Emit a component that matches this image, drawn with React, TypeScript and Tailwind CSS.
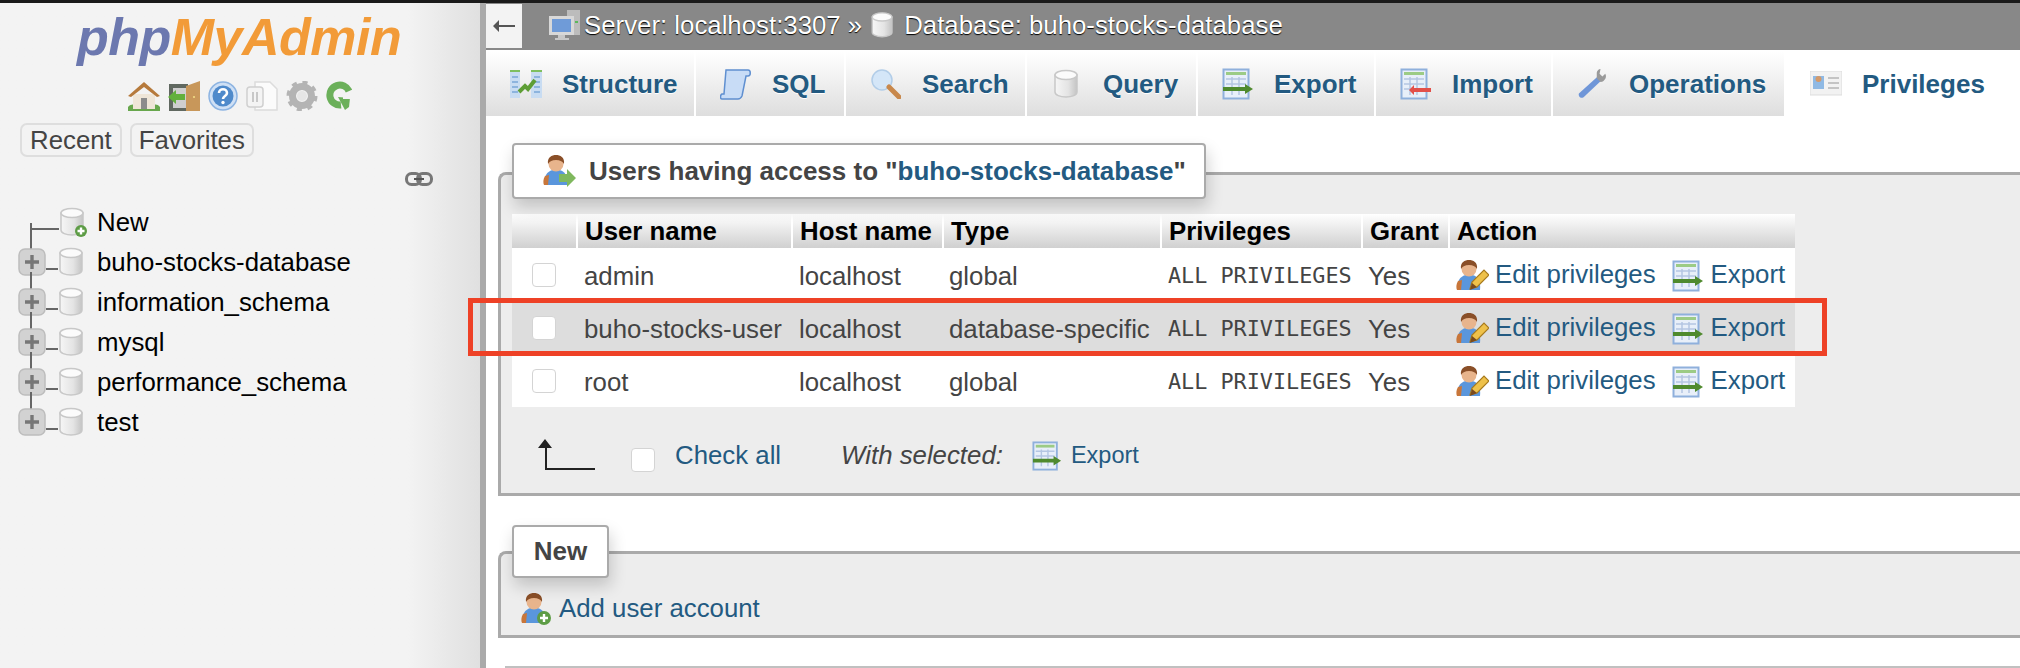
import React from "react";

const sans = "font-['Liberation_Sans',Arial,sans-serif]";

const Db = ({ plus }: { plus?: boolean }) => (
  <svg width="28" height="30" viewBox="0 0 28 30" className="shrink-0">
    <defs>
      <linearGradient id="dbg" x1="0" x2="1" y1="0" y2="0">
        <stop offset="0" stopColor="#f6f6f6" />
        <stop offset="0.6" stopColor="#e4e4e4" />
        <stop offset="1" stopColor="#c4c4c4" />
      </linearGradient>
    </defs>
    <path d="M2 6v17c0 3 5 5 11 5s11-2 11-5V6z" fill="url(#dbg)" stroke="#c8c8c8" strokeWidth="1.5" />
    <ellipse cx="13" cy="6" rx="11" ry="4.5" fill="#fbfbfb" stroke="#c8c8c8" strokeWidth="1.5" />
    {plus && (
      <>
        <circle cx="22" cy="24" r="6" fill="#5d9c45" />
        <path d="M22 20.5v7M18.5 24h7" stroke="#fff" strokeWidth="2.4" />
      </>
    )}
  </svg>
);

const PlusBox = () => (
  <svg width="28" height="28" viewBox="0 0 28 28" className="shrink-0">
    <rect x="1" y="1" width="26" height="26" rx="6" fill="#d2d2d2" stroke="#bdbdbd" strokeWidth="1.5" />
    <path d="M14 7v14M7 14h14" stroke="#777" strokeWidth="3.4" />
  </svg>
);

const TableIcon = ({ arrow = "#4f8a2e", left, size = 32 }: { arrow?: string; left?: boolean; size?: number }) => (
  <svg width={size} height={size} viewBox="0 0 32 32" className="shrink-0">
    <rect x="1.5" y="1.5" width="25" height="29" fill="#e8eff9" stroke="#8fb0dc" strokeWidth="2" />
    <rect x="4" y="4" width="20" height="3" fill="#9ccb85" />
    <path d="M4 11h20M4 16h20M4 21h20M10 9v18M17 9v18" stroke="#b4c6e2" strokeWidth="1.5" />
    {left ? (
      <path d="M31 20v4H14v3l-5-5 5-5v3z" fill={arrow} />
    ) : (
      <path d="M1 19h22v-3l8 5-8 5v-3H1z" fill={arrow} />
    )}
  </svg>
);

const UserBase = ({ children, size = 34 }: { children?: React.ReactNode; size?: number }) => (
  <svg width={size} height={size} viewBox="0 0 34 34" className="shrink-0">
    <path d="M3 31c-2-8 2-14 8-15h6c6 1 9 6 8 15z" fill="#5a96dc" />
    <path d="M3 22c-2 3-2 7-1 9h4l1-10z" fill="#c8763a" />
    <circle cx="14" cy="10" r="7.5" fill="#e8b48c" />
    <path d="M6 10c-1-7 4-9 8-9s9 2 8 9c-2-3-4-4-8-4s-6 1-8 4z" fill="#8a4f28" />
    {children}
  </svg>
);

const EditUser = () => (
  <UserBase>
    <path d="M15 30l2-7 12-12 5 5-12 12z" fill="#eec14a" stroke="#a67a1e" strokeWidth="1.2" />
    <path d="M15 31l2-7 5 4z" fill="#7a4a1e" />
  </UserBase>
);

const Home = () => (
  <svg width="32" height="30" viewBox="0 0 32 30">
    <path d="M0 26c3-3 6-3 8-1h16c3-2 5-2 8 1v4H0z" fill="#68a74d" />
    <path d="M5 13h22v15H5z" fill="#efe6d8" />
    <path d="M13 17h6v11h-6z" fill="#8c8c8c" />
    <path d="M0 15L16 1l16 14-3 1L16 6 3 16z" fill="#b67a3c" />
  </svg>
);

const Exit = () => (
  <svg width="32" height="30" viewBox="0 0 32 30">
    <path d="M1 3h19v27H1z" fill="#606860" />
    <path d="M5 7h13v20H5z" fill="#cfcfcf" />
    <path d="M18 5l14-5v30H18z" fill="#c8975a" />
    <circle cx="26" cy="16" r="1" fill="#f4e08a" />
    <path d="M0 16l8-7v4h9v6H8v4z" fill="#62b03d" />
  </svg>
);

const Help = () => (
  <svg width="30" height="30" viewBox="0 0 30 30">
    <circle cx="15" cy="15" r="14" fill="#cfe0f5" stroke="#8db4e2" strokeWidth="1.5" />
    <circle cx="15" cy="15" r="10.5" fill="#4f8acb" />
    <path d="M11 12c0-5 8-5 8 0 0 3-4 3-4 6" fill="none" stroke="#fff" strokeWidth="2.6" />
    <circle cx="15" cy="21.5" r="1.7" fill="#fff" />
  </svg>
);

const Docs = () => (
  <svg width="32" height="30" viewBox="0 0 32 30">
    <path d="M9 1h15l7 7v21H9z" fill="#fbfbfb" stroke="#dcdcdc" strokeWidth="1.5" />
    <rect x="1" y="6" width="16" height="20" rx="3" fill="#f4f4f4" stroke="#d0d0d0" strokeWidth="1.5" />
    <path d="M7 11v10M11 11v10" stroke="#c8c8c8" strokeWidth="2" />
  </svg>
);

const Gear = () => (
  <svg width="32" height="30" viewBox="0 0 32 30">
    <circle cx="16" cy="15" r="9.5" fill="none" stroke="#b4b4b4" strokeWidth="7" />
    <circle cx="16" cy="15" r="13.5" fill="none" stroke="#b4b4b4" strokeWidth="4" strokeDasharray="5 5.6" />
    <circle cx="16" cy="15" r="5" fill="#e6e6e6" />
  </svg>
);

const Reload = () => (
  <svg width="26" height="30" viewBox="0 0 26 30">
    <path d="M23 10A10 10 0 1 0 15 24" fill="none" stroke="#6bb05a" strokeWidth="7" />
    <path d="M12 16l12 1-1 9-4 3z" fill="#6bb05a" />
    <path d="M17 12h8v6h-8z" fill="#f3f3f3" />
  </svg>
);

const LinkIcon = () => (
  <svg width="28" height="16" viewBox="0 0 28 16">
    <rect x="1.5" y="2.5" width="14" height="11" rx="5" fill="none" stroke="#777" strokeWidth="3" />
    <rect x="12.5" y="2.5" width="14" height="11" rx="5" fill="none" stroke="#777" strokeWidth="3" />
    <path d="M9 8h10" stroke="#555" strokeWidth="2" />
  </svg>
);

const ServerIcon = () => (
  <svg width="32" height="32" viewBox="0 0 32 32" className="shrink-0">
    <rect x="18" y="1" width="13" height="25" fill="#bcbcbc" />
    <rect x="0" y="7" width="25" height="19" fill="#d8d8d8" />
    <rect x="3" y="10" width="19" height="13" fill="#6f9bd8" />
    <path d="M9 26h7v3h4v2H6v-2h3z" fill="#c8c8c8" />
    <rect x="26" y="12" width="3" height="2" fill="#5cb85c" />
  </svg>
);

const StructureIcon = () => (
  <svg width="32" height="30" viewBox="0 0 32 30">
    <rect x="0" y="1" width="10" height="28" fill="#c8dcf2" />
    <rect x="21" y="1" width="11" height="28" fill="#c8dcf2" />
    <path d="M0 2h10M21 2h11" stroke="#7fbf60" strokeWidth="2" />
    <path d="M2 8h6M2 13h6M2 18h6M2 23h6M24 8h6M24 13h6M24 18h6M24 23h6" stroke="#7aa6d8" strokeWidth="1.5" />
    <path d="M9 23l6-6 3 3 7-9" fill="none" stroke="#5e9e35" strokeWidth="4" />
  </svg>
);

const SqlIcon = () => (
  <svg width="32" height="32" viewBox="0 0 32 32">
    <path d="M6 2h22c3 0 3 6 0 6h-2l-4 20c-1 2-2 3-4 3H2c-2 0-2-4 0-5h2z" fill="#c8dcf6" stroke="#5f8fd0" strokeWidth="1.5" />
  </svg>
);

const SearchIcon = () => (
  <svg width="30" height="30" viewBox="0 0 30 30">
    <circle cx="11" cy="11" r="10" fill="#d4e6f8" stroke="#b2cde8" strokeWidth="1.5" />
    <path d="M18 18l10 10" stroke="#c8884c" strokeWidth="5" strokeLinecap="round" />
  </svg>
);

const WrenchIcon = () => (
  <svg width="34" height="32" viewBox="0 0 34 32">
    <path d="M22 8L2 26c-1 3 2 6 5 4l18-17z" fill="#6f96d8" />
    <path d="M21 4c0-2 2-4 4-4l-1 5 3 3 3-3c2 3 0 8-5 9l-4-4z" fill="#9a9a9a" />
  </svg>
);

const PrivIcon = () => (
  <svg width="32" height="26" viewBox="0 0 32 26">
    <rect x="0" y="0" width="32" height="24" fill="#f2f2f2" stroke="#ddd" />
    <rect x="3" y="5" width="11" height="13" fill="#8fb9e4" />
    <circle cx="8.5" cy="8" r="3" fill="#d49a6a" />
    <path d="M18 7h11M18 12h11M18 17h11" stroke="#c4c4c4" strokeWidth="2" />
  </svg>
);

const tabs = [
  { label: "Structure", w: "w-[210px]", icon: <StructureIcon /> },
  { label: "SQL", w: "w-[150px]", icon: <SqlIcon /> },
  { label: "Search", w: "w-[181px]", icon: <SearchIcon /> },
  { label: "Query", w: "w-[171px]", icon: <Db /> },
  { label: "Export", w: "w-[178px]", icon: <TableIcon /> },
  { label: "Import", w: "w-[177px]", icon: <TableIcon arrow="#e2504a" left /> },
  { label: "Operations", w: "w-[233px]", icon: <WrenchIcon /> },
  { label: "Privileges", w: "w-[216px]", icon: <PrivIcon />, active: true },
];

const users = [
  { name: "admin", type: "global" },
  { name: "buho-stocks-user", type: "database-specific", marked: true },
  { name: "root", type: "global" },
];

const Checkbox = () => (
  <span className="inline-block w-6 h-6 bg-white border border-[#d4d4d4] rounded-[4px]" />
);

export default function App() {
  return (
    <div className={`${sans} w-[2020px] h-[668px] overflow-hidden flex flex-col bg-white relative`}>
      <div className="h-[3px] bg-[#1a1a1a] shrink-0" />
      <div className="flex flex-1 min-h-0">
        {/* sidebar */}
        <aside className="w-[480px] shrink-0 bg-gradient-to-r from-[#f3f3f3] via-[#f3f3f3] via-85% to-[#e0e0e0] border-r-[6px] border-[#aaaaaa] box-content">
          <div className="pl-[77px] h-[67px] pt-[4px] text-[52px] leading-[60px] font-bold italic tracking-[-0.5px]">
            <span className="text-[#6c78af]">php</span>
            <span className="text-[#f29b38]">MyAdmin</span>
          </div>
          <div className="flex items-center gap-[8px] pl-[128px] h-[33px] mt-[9px]">
            <Home />
            <Exit />
            <Help />
            <Docs />
            <Gear />
            <Reload />
          </div>
          <div className="flex gap-[8px] pl-[20px] mt-[11px] text-[25.8px] text-[#444]">
            <span className="h-[34px] px-[8px] leading-[30px] border-2 border-[#dedede] rounded-[7px]">Recent</span>
            <span className="h-[34px] px-[7px] leading-[30px] border-2 border-[#dedede] rounded-[7px]">Favorites</span>
          </div>
          <div className="flex justify-end pr-[47px] mt-[14px]">
            <LinkIcon />
          </div>
          <ul className="mt-[15px] text-[25.8px] text-black">
            <li className="flex items-center h-[40px] relative">
              <span className="absolute left-[30px] top-[21px] h-[30px] border-l-2 border-[#666]" />
              <span className="self-start mt-[26px] ml-[31px] w-[28px] border-t-2 border-[#666]" />
              <Db plus />
              <span className="ml-[10px]">New</span>
            </li>
            {["buho-stocks-database", "information_schema", "mysql", "performance_schema", "test"].map((db, i) => (
              <li key={db} className="flex items-center h-[40px] relative pl-[18px]">
                {i < 4 && <span className="absolute left-[30px] top-[30px] h-[22px] border-l-2 border-[#666]" />}
                <PlusBox />
                <span className="w-[12px] border-t-2 border-[#666] mt-[14px]" />
                <Db />
                <span className="ml-[11px]">{db}</span>
              </li>
            ))}
          </ul>
        </aside>

        {/* main */}
        <main className="flex-1 min-w-0 flex flex-col">
          <div className="h-[47px] bg-[#888888] flex items-start shrink-0">
            <div className="w-[36px] h-[44px] mt-px bg-[#f3f3f3] flex items-center justify-center">
              <svg width="22" height="14" viewBox="0 0 22 14">
                <path d="M22 6v2H6v5L0 7l6-6v5z" fill="#555" />
              </svg>
            </div>
            <div className="flex items-center h-[44px] ml-[27px] text-[25.8px] text-white [text-shadow:0_1px_1px_#000]">
              <ServerIcon />
              <span className="ml-[3px]">Server: localhost:3307 »</span>
              <span className="mx-[7px] scale-90"><Db /></span>
              <span>Database: buho-stocks-database</span>
            </div>
          </div>
          <div className="flex h-[64px] mt-[2px] shrink-0">
            {tabs.map((t) => (
              <div
                key={t.label}
                className={`${t.w} shrink-0 flex items-center pl-[24px] gap-[20px] border-r-2 border-white text-[26px] font-bold text-[#235a81] [text-shadow:0_1px_0_#fff] ${
                  t.active ? "bg-white" : "bg-gradient-to-b from-white to-[#dedede]"
                }`}
              >
                <span className="w-[32px] flex justify-center">{t.icon}</span>
                {t.label}
              </div>
            ))}
          </div>

          <div className="relative flex-1 min-h-0 pl-[12px]">
            <section className="mt-[56px] h-[324px] bg-[#ededed] border-l-[3px] border-t-[3px] border-b-[3px] border-[#aaaaaa] rounded-tl-[8px] pl-[11px]">
              <div className="relative -mt-[32px] w-[694px] h-[56px] flex items-center pl-[28px] gap-[13px] bg-white border-2 border-[#aaaaaa] rounded-[4px] shadow-[2px_8px_16px_rgba(0,0,0,0.18)] text-[26px] font-bold text-[#444]">
                <UserBase>
                  <path d="M17 20h8v-5l9 9-9 9v-5h-8z" fill="#7fb85e" />
                </UserBase>
                <span>
                  Users having access to "<span className="text-[#235a81]">buho-stocks-database</span>"
                </span>
              </div>
              <table className="mt-[15px] w-[1283px] table-fixed border-collapse text-[25.8px] text-[#444]">
                <colgroup>
                  <col className="w-[65px]" />
                  <col className="w-[215px]" />
                  <col className="w-[151px]" />
                  <col className="w-[218px]" />
                  <col className="w-[201px]" />
                  <col className="w-[87px]" />
                  <col />
                </colgroup>
                <thead>
                  <tr className="h-[34px] text-black text-left font-bold">
                    {["", "User name", "Host name", "Type", "Privileges", "Grant", "Action"].map((h, i) => (
                      <th key={i} className={`bg-gradient-to-b from-white to-[#d0d0d0] p-0 pl-[7px] leading-[30px] ${i < 6 ? "border-r-2 border-white" : ""}`}>
                        {h}
                      </th>
                    ))}
                  </tr>
                </thead>
                <tbody>
                  {users.map((u) => (
                    <tr key={u.name} className={`h-[53px] ${u.marked ? "bg-[#dddddd]" : "bg-white"}`}>
                      <td className="p-0 pl-[20px]">
                        <div className="flex"><Checkbox /></div>
                      </td>
                      <td className="p-0 pl-[7px] pt-[3px] whitespace-nowrap">{u.name}</td>
                      <td className="p-0 pl-[7px] pt-[3px]">localhost</td>
                      <td className="p-0 pl-[6px] pt-[3px] whitespace-nowrap">{u.type}</td>
                      <td className="p-0 pl-[7px] pt-[3px] text-[21.8px] font-['DejaVu_Sans_Mono',monospace]">ALL PRIVILEGES</td>
                      <td className="p-0 pl-[6px] pt-[3px]">Yes</td>
                      <td className="p-0 pl-[6px] pt-[3px]">
                        <div className="flex items-center text-[#235a81] whitespace-nowrap">
                          <EditUser />
                          <span className="ml-[6px] pb-[3px]">Edit privileges</span>
                          <span className="ml-[16px] flex"><TableIcon /></span>
                          <span className="ml-[7px] pb-[3px]">Export</span>
                        </div>
                      </td>
                    </tr>
                  ))}
                </tbody>
              </table>
              <div className="flex items-center h-[85px] pt-[12px] text-[25.8px]">
                <svg width="60" height="34" viewBox="0 0 60 34" className="ml-[25px] shrink-0">
                  <path d="M8 0l7 9H10v20h48v2H8V9H1z" fill="#222" />
                </svg>
                <span className="ml-[34px] flex mt-[9px]"><Checkbox /></span>
                <span className="ml-[20px] text-[#235a81]">Check all</span>
                <span className="ml-[60px] italic text-[#444]">With selected:</span>
                <span className="ml-[29px] flex"><TableIcon size={30} /></span>
                <span className="ml-[9px] text-[23.5px] text-[#235a81]">Export</span>
              </div>
            </section>

            <section className="mt-[55px] h-[87px] bg-[#ededed] border-l-[3px] border-t-[3px] border-b-[3px] border-[#aaaaaa] rounded-tl-[8px] pl-[11px]">
              <div className="relative -mt-[29px] w-[97px] h-[53px] flex items-center justify-center bg-white border-2 border-[#aaaaaa] rounded-[4px] shadow-[2px_8px_16px_rgba(0,0,0,0.18)] text-[26px] font-bold text-[#444]">
                New
              </div>
              <div className="flex items-center ml-[8px] mt-[11px] text-[25.8px] text-[#235a81]">
                <UserBase>
                  <circle cx="24" cy="26" r="7" fill="#5d9c45" />
                  <path d="M24 22v8M20 26h8" stroke="#fff" strokeWidth="2.4" />
                </UserBase>
                <span className="ml-[5px] pb-[2px]">Add user account</span>
              </div>
            </section>
            <div className="mt-[28px] ml-[7px] border-t-[3px] border-[#c0c0c0]" />
          </div>
        </main>
      </div>
      {/* red annotation drawn over the screenshot */}
      <div className="absolute left-[468px] top-[298px] w-[1359px] h-[58px] border-[5px] border-[#ee4126]" />
    </div>
  );
}
